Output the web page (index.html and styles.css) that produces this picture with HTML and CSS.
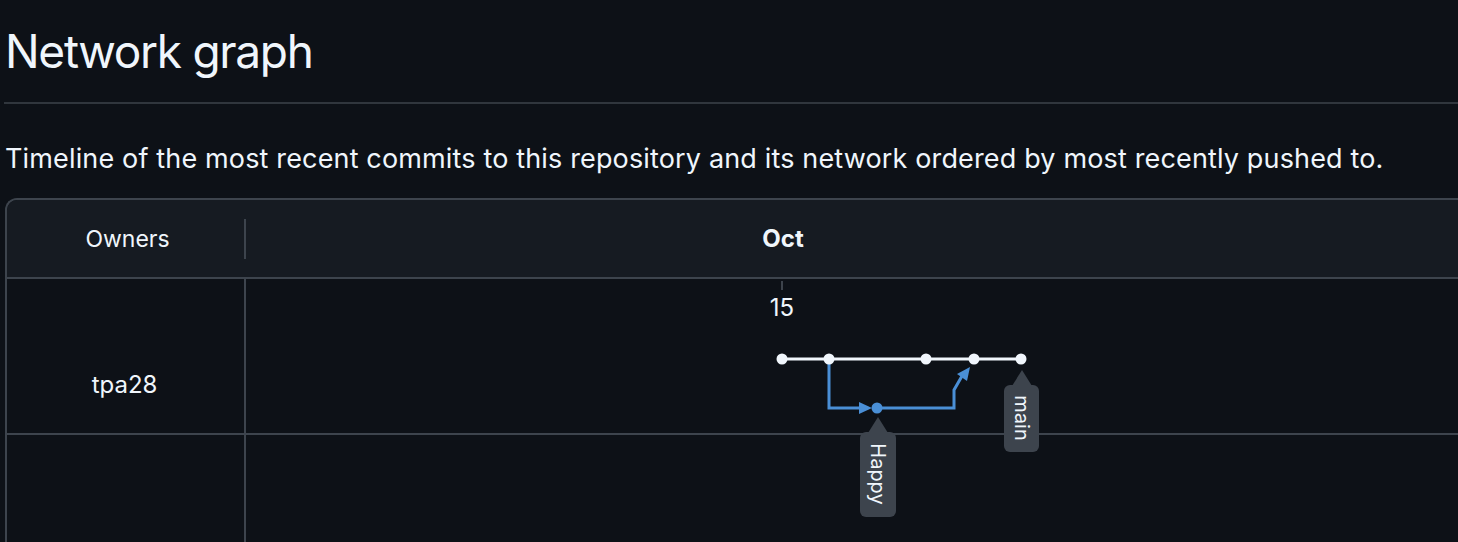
FILE: index.html
```html
<!DOCTYPE html>
<html lang="en">
<head>
  <meta charset="UTF-8">
  <meta name="viewport" content="width=device-width, initial-scale=1.0">
  <title>Network graph</title>
  <link rel="stylesheet" href="styles.css">
</head>
<body>
  <div class="page">
    <h1 class="title">Network graph</h1>
    <p class="lead">Timeline of the most recent commits to this repository and its network ordered by most recently pushed to.</p>

    <div class="network">
      <div class="network-head">
        <div class="owners-head"><span>Owners</span></div>
        <div class="month-head">Oct</div>
      </div>
      <div class="network-row">
        <div class="owner">tpa28</div>
        <div class="lane"></div>
      </div>
      <div class="network-row">
        <div class="owner"></div>
        <div class="lane"></div>
      </div>

      <!-- graph canvas, drawn in page coordinates via the viewBox offset -->
      <svg class="graph" viewBox="5 198 1600 400" width="1600" height="400">
        <line x1="782" y1="281" x2="782" y2="290" stroke="#6e7681" stroke-width="1"/>
        <text x="782" y="316" class="day">15</text>

        <!-- main branch -->
        <line x1="782" y1="359" x2="1021" y2="359" stroke="#f0f6fc" stroke-width="3"/>

        <!-- Happy branch -->
        <polyline points="829,359 829,408 862,408" fill="none" stroke="#4a8fd6" stroke-width="3"/>
        <polygon points="859,402 872,408 859,414" fill="#4a8fd6"/>
        <polyline points="877,408 954,408 954,390 962,376" fill="none" stroke="#4a8fd6" stroke-width="3"/>
        <polygon points="957,374 970,367 967,381" fill="#4a8fd6"/>
        <circle cx="877" cy="408" r="5.5" fill="#4a8fd6"/>

        <circle cx="782" cy="359" r="5.5" fill="#f0f6fc"/>
        <circle cx="829" cy="359" r="5.5" fill="#f0f6fc"/>
        <circle cx="926" cy="359" r="5.5" fill="#f0f6fc"/>
        <circle cx="974" cy="359" r="5.5" fill="#f0f6fc"/>
        <circle cx="1021" cy="359" r="5.5" fill="#f0f6fc"/>

        <!-- branch labels -->
        <polygon points="878,417 868,433 888,433" fill="#3d444d"/>
        <rect x="860" y="432" width="36" height="85" rx="6" fill="#3d444d"/>
        <text class="tag" transform="translate(871 474) rotate(90)">Happy</text>

        <polygon points="1022,370 1012,386 1032,386" fill="#3d444d"/>
        <rect x="1004" y="385" width="35" height="67" rx="6" fill="#3d444d"/>
        <text class="tag" transform="translate(1015 418) rotate(90)">main</text>
      </svg>
    </div>
  </div>
</body>
</html>
```

FILE: styles.css
```css
:root {
  --bg: #0d1117;
  --bg-head: #161b22;
  --border: #3d444d;
  --text: #f0f6fc;
}

html, body {
  margin: 0;
  background: var(--bg);
  overflow: hidden;
}

body {
  font-family: Inter, "Noto Sans", "Liberation Sans", sans-serif;
  color: var(--text);
}

.page {
  padding-left: 4px;
  width: 1700px;
}

.title {
  margin: 0;
  padding: 19px 0 19px 1px;
  font-size: 46px;
  font-weight: 400;
  letter-spacing: -1.3px;
  line-height: 64px;
  border-bottom: 2px solid #30363d;
}

.lead {
  margin: 0;
  padding: 37px 0 0 1px;
  font-size: 27px;
  letter-spacing: 0.15px;
  line-height: 36px;
  height: 57px;
}

.network {
  position: relative;
  margin-left: 1px;
  border: 2px solid var(--border);
  border-right: none;
  border-radius: 12px 0 0 0;
  overflow: hidden;
}

.network-head {
  display: flex;
  height: 77px;
  background: var(--bg-head);
  border-bottom: 2px solid var(--border);
}

.owners-head {
  width: 239px;
  display: flex;
  align-items: center;
  font-size: 23px;
}

.owners-head span {
  flex: 1;
  text-align: center;
  padding-left: 4px;
  border-right: 2px solid var(--border);
  line-height: 40px;
}

.month-head {
  width: 1074px;
  display: flex;
  align-items: center;
  justify-content: center;
  font-size: 24px;
  font-weight: 700;
}

.network-row {
  display: flex;
  height: 154px;
  border-bottom: 2px solid var(--border);
}

.owner {
  width: 239px;
  border-right: 2px solid var(--border);
  display: flex;
  align-items: center;
  justify-content: center;
  font-size: 24px;
  padding: 56px 2px 0 0;
  box-sizing: border-box;
}

.lane {
  flex: 1;
}

.graph {
  position: absolute;
  left: -2px;
  top: -2px;
}

.graph text {
  font-family: Inter, "Noto Sans", "Liberation Sans", sans-serif;
  fill: var(--text);
}

.day {
  font-size: 24px;
  text-anchor: middle;
}

.tag {
  font-size: 20px;
  text-anchor: middle;
}
```
